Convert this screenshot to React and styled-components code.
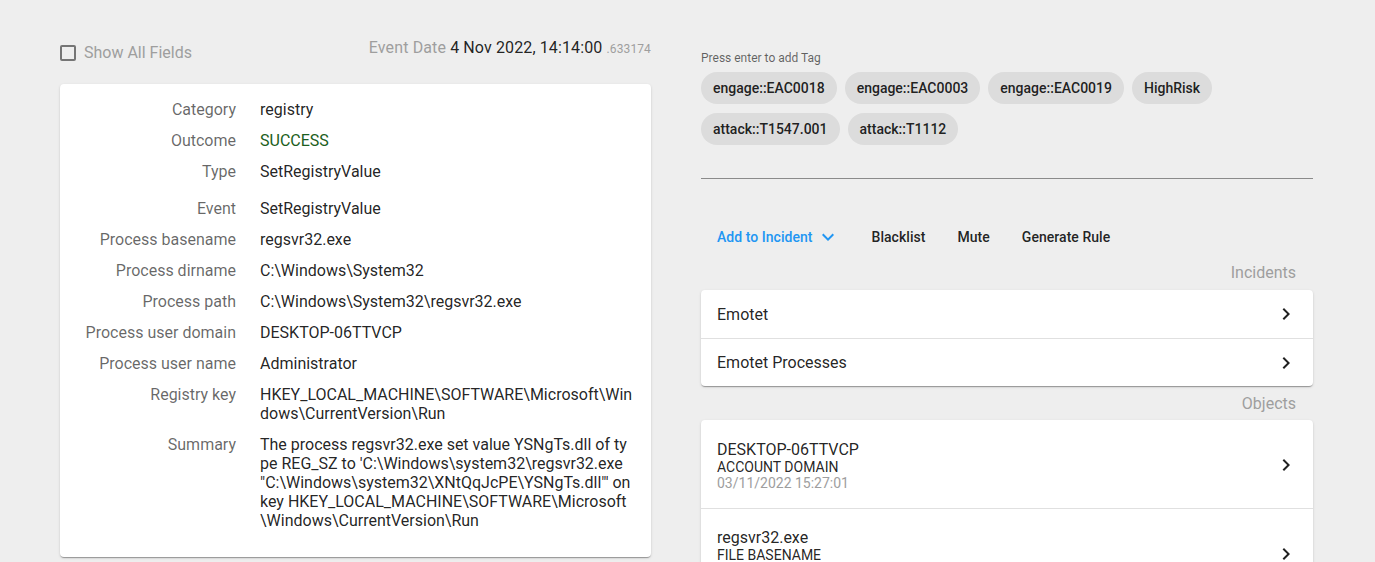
import React from 'react'
import styled, { createGlobalStyle } from 'styled-components'

const GlobalStyle = createGlobalStyle`
  html, body {
    margin: 0;
    padding: 0;
    overflow: hidden;
    background: #eeeeee;
    font-family: Roboto, 'Liberation Sans', sans-serif;
    color: rgba(0, 0, 0, 0.87);
  }
`

const fieldGroups = [
  [
    ['Category', 'registry'],
    ['Outcome', 'SUCCESS', true],
    ['Type', 'SetRegistryValue'],
  ],
  [
    ['Event', 'SetRegistryValue'],
    ['Process basename', 'regsvr32.exe'],
    ['Process dirname', 'C:\\Windows\\System32'],
    ['Process path', 'C:\\Windows\\System32\\regsvr32.exe'],
    ['Process user domain', 'DESKTOP-06TTVCP'],
    ['Process user name', 'Administrator'],
    ['Registry key', 'HKEY_LOCAL_MACHINE\\SOFTWARE\\Microsoft\\Windows\\CurrentVersion\\Run'],
    [
      'Summary',
      'The process regsvr32.exe set value YSNgTs.dll of type REG_SZ to \'C:\\Windows\\system32\\regsvr32.exe "C:\\Windows\\system32\\XNtQqJcPE\\YSNgTs.dll"\' on key HKEY_LOCAL_MACHINE\\SOFTWARE\\Microsoft\\Windows\\CurrentVersion\\Run',
    ],
  ],
]

const tags = [
  'engage::EAC0018',
  'engage::EAC0003',
  'engage::EAC0019',
  'HighRisk',
  'attack::T1547.001',
  'attack::T1112',
]

const objects = [
  { name: 'DESKTOP-06TTVCP', kind: 'ACCOUNT DOMAIN', date: '03/11/2022 15:27:01' },
  { name: 'regsvr32.exe', kind: 'FILE BASENAME', date: '03/11/2022 15:27:01' },
]

const ChevronRight = () => (
  <svg width='24' height='24' viewBox='0 0 24 24' fill='currentColor'>
    <path d='M10 6 8.59 7.41 13.17 12l-4.58 4.59L10 18l6-6z' />
  </svg>
)

const ExpandMore = () => (
  <svg width='24' height='24' viewBox='0 0 24 24' fill='currentColor'>
    <path d='M16.59 8.59 12 13.17 7.41 8.59 6 10l6 6 6-6z' />
  </svg>
)

const App = () => {
  return (
    <>
      <GlobalStyle />
      <Page>
        <LeftColumn>
          <Header>
            <CheckLabel>
              <CheckBox />
              Show All Fields
            </CheckLabel>
            <EventDate>
              Event Date <strong>4 Nov 2022, 14:14:00</strong> <small>.633174</small>
            </EventDate>
          </Header>
          <DetailCard>
            {fieldGroups.map((group, i) => (
              <FieldGroup key={i}>
                {group.map(([label, value, success]) => (
                  <FieldRow key={label}>
                    <FieldLabel>{label}</FieldLabel>
                    <FieldValue $success={success}>{value}</FieldValue>
                  </FieldRow>
                ))}
              </FieldGroup>
            ))}
          </DetailCard>
        </LeftColumn>

        <RightColumn>
          <TagInput>
            <Hint>Press enter to add Tag</Hint>
            <Chips>
              {tags.map((tag) => (
                <Chip key={tag}>{tag}</Chip>
              ))}
            </Chips>
          </TagInput>

          <Actions>
            <ActionButton $primary>
              Add to Incident
              <ExpandMore />
            </ActionButton>
            <ActionButton>Blacklist</ActionButton>
            <ActionButton>Mute</ActionButton>
            <ActionButton>Generate Rule</ActionButton>
          </Actions>

          <SectionTitle>Incidents</SectionTitle>
          <ListCard>
            <ListItem>
              <span>Emotet</span>
              <ChevronRight />
            </ListItem>
            <ListItem>
              <span>Emotet Processes</span>
              <ChevronRight />
            </ListItem>
          </ListCard>

          <SectionTitle $tight>Objects</SectionTitle>
          <ListCard>
            {objects.map((obj) => (
              <ObjectItem key={obj.name}>
                <ObjectText>
                  <ObjectName>{obj.name}</ObjectName>
                  <ObjectKind>{obj.kind}</ObjectKind>
                  <ObjectDate>{obj.date}</ObjectDate>
                </ObjectText>
                <ChevronRight />
              </ObjectItem>
            ))}
          </ListCard>
        </RightColumn>
      </Page>
    </>
  )
}

const Page = styled.div`
  display: flex;
  align-items: flex-start;
  gap: 50px;
  padding: 36px 60px;
`

const LeftColumn = styled.div`
  width: 591px;
  flex-shrink: 0;
`

const Header = styled.div`
  display: flex;
  justify-content: space-between;
  align-items: flex-start;
  height: 48px;
`

const CheckLabel = styled.label`
  display: flex;
  align-items: center;
  gap: 8px;
  margin-top: 7px;
  font-size: 16px;
  line-height: 20px;
  color: #9e9e9e;
  cursor: pointer;
`

const CheckBox = styled.span`
  display: inline-block;
  box-sizing: border-box;
  width: 16px;
  height: 16px;
  border: 2px solid #757575;
  border-radius: 2px;
`

const EventDate = styled.div`
  font-size: 16px;
  line-height: 24px;
  letter-spacing: 0.12px;
  color: #9e9e9e;
  strong {
    font-weight: 400;
    color: rgba(0, 0, 0, 0.87);
  }
  small {
    font-size: 12px;
  }
`

const DetailCard = styled.div`
  background: #fff;
  border-radius: 4px;
  box-shadow: 0 2px 1px -1px rgba(0, 0, 0, 0.2), 0 1px 1px 0 rgba(0, 0, 0, 0.14),
    0 1px 3px 0 rgba(0, 0, 0, 0.12);
  padding: 10px 16px 21px;
`

const FieldGroup = styled.div`
  & + & {
    margin-top: 6px;
  }
`

const FieldRow = styled.div`
  display: grid;
  grid-template-columns: 160px 1fr;
  column-gap: 24px;
  padding: 6px 0;
  font-size: 16px;
  line-height: 19px;
`

const FieldLabel = styled.div`
  text-align: right;
  color: rgba(0, 0, 0, 0.6);
`

const FieldValue = styled.div`
  color: ${(props) => (props.$success ? '#1b5e20' : 'rgba(0, 0, 0, 0.87)')};
  word-break: break-all;
`

const RightColumn = styled.div`
  width: 612px;
  flex-shrink: 0;
`

const TagInput = styled.div`
  border-bottom: 1px solid rgba(0, 0, 0, 0.42);
  padding-top: 14px;
  padding-bottom: 33px;
`

const Hint = styled.div`
  font-size: 12px;
  line-height: 16px;
  color: rgba(0, 0, 0, 0.6);
  margin-bottom: 6px;
`

const Chips = styled.div`
  display: flex;
  flex-wrap: wrap;
  column-gap: 8px;
  row-gap: 9px;
  width: 520px;
`

const Chip = styled.span`
  display: inline-flex;
  align-items: center;
  height: 32px;
  padding: 0 12px;
  border-radius: 16px;
  background: #dcdcdc;
  font-size: 14px;
  font-weight: 500;
  color: rgba(0, 0, 0, 0.87);
`

const Actions = styled.div`
  display: flex;
  margin-top: 40px;
`

const ActionButton = styled.button`
  display: inline-flex;
  align-items: center;
  gap: 3px;
  height: 36px;
  padding: 0 16px;
  border: none;
  background: none;
  font-family: inherit;
  font-size: 14px;
  font-weight: 500;
  letter-spacing: 0.04px;
  color: ${(props) => (props.$primary ? '#2196f3' : 'rgba(0, 0, 0, 0.87)')};
  cursor: pointer;
`

const SectionTitle = styled.div`
  text-align: right;
  padding-right: 17px;
  font-size: 16px;
  line-height: 19px;
  color: #9e9e9e;
  margin: ${(props) => (props.$tight ? '8px 0 7px' : '8px 0 8px')};
`

const ListCard = styled.div`
  background: #fff;
  border-radius: 4px;
  overflow: hidden;
  box-shadow: 0 2px 1px -1px rgba(0, 0, 0, 0.2), 0 1px 1px 0 rgba(0, 0, 0, 0.14),
    0 1px 3px 0 rgba(0, 0, 0, 0.12);
`

const ListItem = styled.div`
  display: flex;
  align-items: center;
  justify-content: space-between;
  height: 48px;
  box-sizing: border-box;
  padding: 0 15px 0 16px;
  font-size: 16px;
  & + & {
    border-top: 1px solid #e0e0e0;
  }
`

const ObjectItem = styled(ListItem)`
  height: 88px;
  padding-top: 2px;
`

const ObjectText = styled.div`
  display: flex;
  flex-direction: column;
`

const ObjectName = styled.span`
  font-size: 16px;
  line-height: 19px;
`

const ObjectKind = styled.span`
  font-size: 14px;
  line-height: 16px;
`

const ObjectDate = styled.span`
  font-size: 14px;
  line-height: 16px;
  color: #9e9e9e;
`

export default App
